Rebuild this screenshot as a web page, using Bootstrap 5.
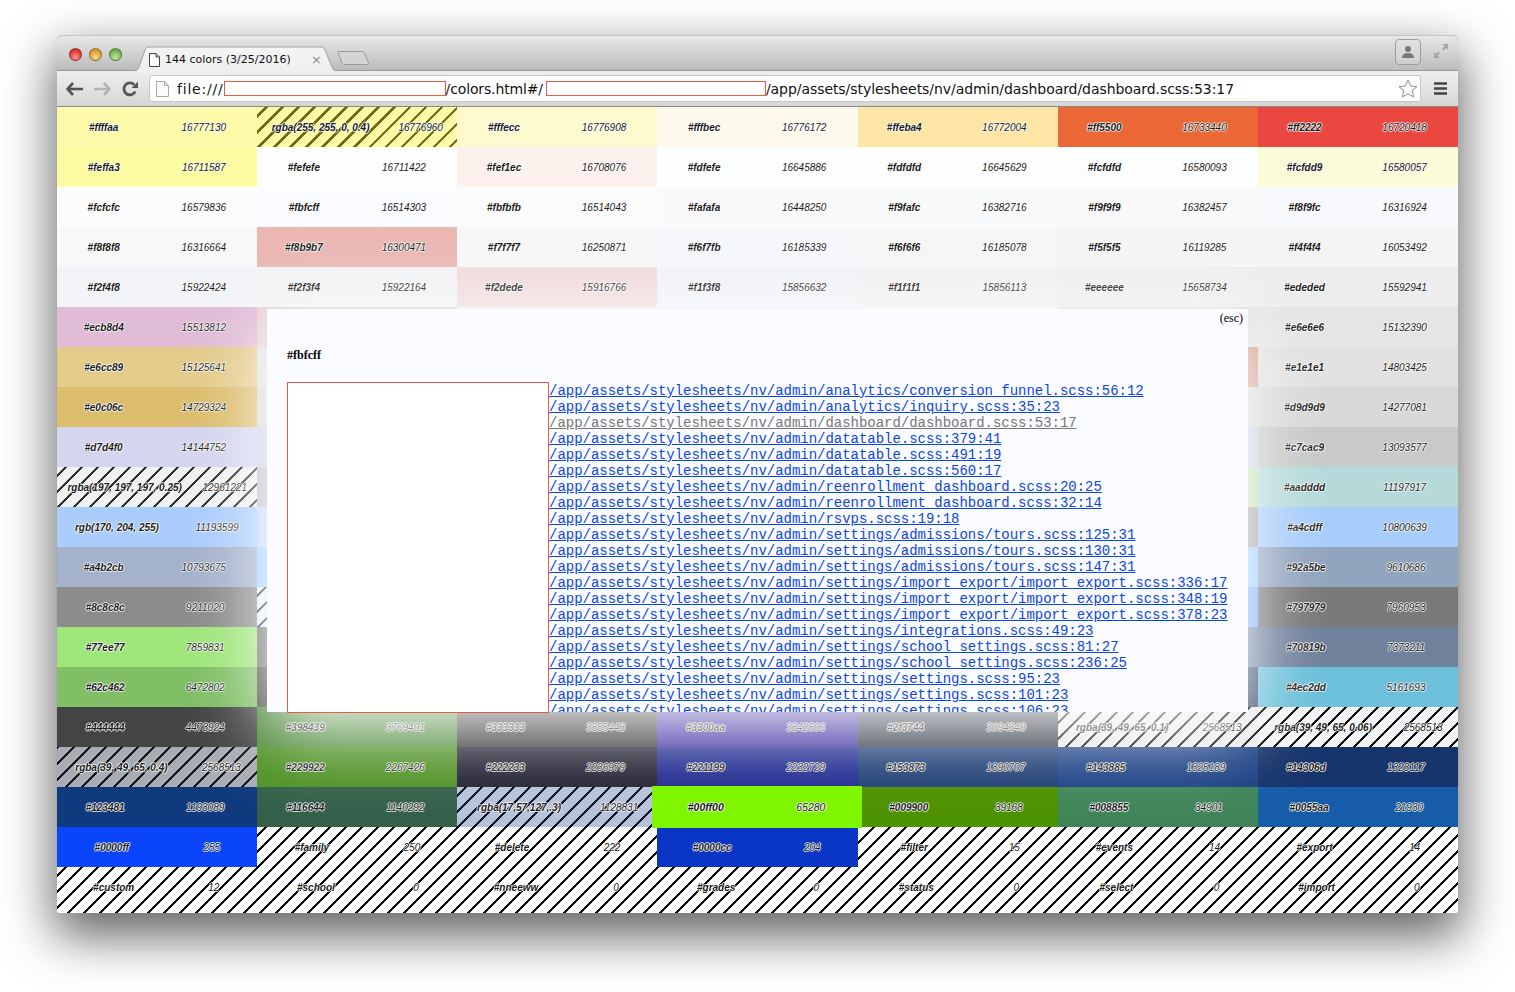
<!DOCTYPE html>
<html lang="en">
<head>
<meta charset="UTF-8">
<title>144 colors (3/25/2016)</title>
<link href="https://cdn.jsdelivr.net/npm/bootstrap@5.3.0/dist/css/bootstrap.min.css" rel="stylesheet">
<style>
html, body { height: 100%; }
body { background: #fff; margin: 0; overflow: hidden; }
.shot { padding: 35px 57px 0; }
.win { width: 1401px; height: 878px; border-radius: 5px 5px 3px 3px; box-shadow: 0 20px 50px 3px rgba(0,0,0,.62); }

/* browser chrome */
.tabstrip { height: 36px; background: linear-gradient(#e9e9e9, #bcbcbc); border-bottom: 1px solid #979797; border-radius: 5px 5px 0 0; padding-left: 12px; padding-right: 9px; box-shadow: inset 0 1px 0 #c4c4c4; }
.lights { margin-top: 13px; }
.light { width: 13px; height: 13px; border-radius: 50%; margin-right: 7px; border: 1px solid rgba(0,0,0,.35); }
.light-r { background: radial-gradient(circle at 50% 75%, #f79a94, #d8322c 70%); }
.light-y { background: radial-gradient(circle at 50% 75%, #f9d98c, #d99a28 70%); }
.light-g { background: radial-gradient(circle at 50% 75%, #c4e79a, #72ad4c 70%); }
.tabshape { width: 204px; height: 25px; margin-left: 4px; margin-top: 11px; padding: 3px 11px 0 16px; position: relative; }
.tabshape svg.tabbg { position: absolute; left: 0; top: 0; }
.tabicon { position: relative; margin-right: 5px; }
.tabtitle { position: relative; font: 11px/16px "DejaVu Sans", sans-serif; color: #111; white-space: nowrap; }
.tabclose { position: relative; font: 13px/16px "DejaVu Sans", sans-serif; color: #8a8a8a; }
.newtab { margin-left: 0; margin-top: 15px; }
.person { width: 26px; height: 26px; border: 1px solid #9c9c9c; border-radius: 4px; margin-right: 12px; background: linear-gradient(#e2e2e2, #cfcfcf); }
.toolbar { height: 36px; background: linear-gradient(#efefef, #d6d6d6); border-bottom: 1px solid #8a8a8a; padding-left: 9px; padding-right: 9px; }
.navgap { margin-left: 11px; }
.omnibox { width: 1272px; height: 27px; margin-left: 11px; margin-right: 13px; padding: 0 2px 0 6px; background: #fff; border: 1px solid #c6c6c6; border-radius: 3px; font: 14px/25px "DejaVu Sans", sans-serif; color: #111; white-space: nowrap; }
.omnibox span { padding-top: 1px; }
.url-scheme { letter-spacing: .8px; }
.url-mid { letter-spacing: -.14px; }
.url-tail { letter-spacing: -.06px; }
.omnibox .redact { display: inline-block; height: 15px; padding: 0; background: #fff; border: 1px solid #ea5b47; }
.redact-a { width: 222px; }
.redact-b { width: 220px; margin-left: 3px; }

/* colour grid */
.colorpage { height: 806px; overflow: hidden; position: relative; border-radius: 0 0 3px 3px;
  background: repeating-linear-gradient(135deg, #000 0, #000 2.2px, #fff 2.2px, #fff 11.31px); }
.colorgrid { display: grid; grid-template-columns: repeat(7, 1fr); grid-auto-rows: 40px; }
.swatch { font: italic 10px/12px "Liberation Sans", Arial, sans-serif; color: #1c1c1c; padding-top: 1px; text-shadow: 1px 0 0 rgba(255,255,255,.8), -1px 0 0 rgba(255,255,255,.8), 0 1px 0 rgba(255,255,255,.8), 0 -1px 0 rgba(255,255,255,.8); white-space: nowrap; min-width: 0; }
.swatch span { flex-basis: 0; text-align: center; }
.swatch-name { font-weight: 700; }
.swatch-hot { position: relative; z-index: 3; transform: scale(1.05); }

/* popup */
.popup { position: absolute; left: 210px; top: 202px; width: 981px; height: 403px; z-index: 2; background: #fbfcff; box-shadow: 0 15px 70px 2px #fff; padding: 0 5px 0 20px; font-family: "Liberation Serif", serif; color: #000; }
.popup-esc { font-size: 12px; line-height: 18px; text-align: right; }
.popup-title { font-size: 12px; line-height: 18px; font-weight: 700; margin: 19px 0 18px; }
.popup-sample { width: 262px; height: 331px; background: #fff; border: 1px solid #ea5b47; flex: none; }
.popup-links { height: 330px; padding-top: 1px; overflow: hidden; font: 14px/16px "Liberation Mono", "Courier New", monospace; letter-spacing: -.025px; white-space: nowrap; }
.popup-links a { display: block; color: #0b45e5; }
.popup-links a.seen { color: #777; }
</style>
</head>
<body>
<div class="shot">
  <div class="win">
    <div class="tabstrip d-flex align-items-start">
      <div class="lights d-flex">
        <div class="light light-r"></div>
        <div class="light light-y"></div>
        <div class="light light-g"></div>
      </div>
      <div class="tabshape d-flex align-items-center">
        <svg class="tabbg" width="204" height="25" viewBox="0 0 204 25"><defs><linearGradient id="tabfill" x1="0" y1="0" x2="0" y2="1"><stop offset="0" stop-color="#f4f4f4"/><stop offset="1" stop-color="#efefef"/></linearGradient></defs><path d="M0 25c4 0 5-1 6-4L12 4c1-2 2-3 5-3h171c2 0 3 1 4 3l7 17c1 3 2 4 5 4" fill="url(#tabfill)" stroke="#a2a2a2"/></svg>
        <svg class="tabicon" width="11" height="14" viewBox="0 0 11 14"><path d="M.5.5h6.500l3.500 3.500v9.500H.5zM7 .5V4h3.500" fill="#fff" stroke="#444"/></svg>
        <span class="tabtitle flex-grow-1">144 colors (3/25/2016)</span>
        <span class="tabclose me-1">×</span>
      </div>
      <svg class="newtab" width="33" height="16" viewBox="0 0 33 16"><path d="M1.500 1.500h24c1 0 1.500.5 2 1.500l4 10c.3 1.200 0 1.500-1 1.500H7c-1 0-1.500-.5-2-1.500L1 3c-.3-1 0-1.500.5-1.500z" fill="#d4d4d4" stroke="#9a9a9a"/></svg>
      <div class="flex-grow-1"></div>
      <div class="person d-flex justify-content-center align-items-center mt-1">
        <svg width="14" height="14" viewBox="0 0 14 14"><circle cx="7" cy="4" r="3" fill="#777"/><path d="M1 13c0-3 2-5 6-5s6 2 6 5z" fill="#777"/></svg>
      </div>
      <svg class="mt-2" width="16" height="16" viewBox="0 0 16 16"><path d="M9 1h6v6l-2-2-2.500 2.500-1.500-1.500L11.500 3zM7 15H1V9l2 2 2.500-2.500L7 10 4.500 13z" fill="#a6a6a6"/></svg>
    </div>
    <div class="toolbar d-flex align-items-center">
      <svg width="17" height="14" viewBox="0 0 17 14"><path d="M7 1 1.500 7 7 13M2 7h15" fill="none" stroke="#555" stroke-width="2.600"/></svg>
      <svg class="navgap" width="17" height="14" viewBox="0 0 17 14"><path d="M10 1l5.500 6L10 13M15 7H0" fill="none" stroke="#b4b4b4" stroke-width="2.600"/></svg>
      <svg class="navgap" width="16" height="16" viewBox="0 0 16 16"><path d="M13.300 10.500A6 6 0 1 1 12.200 3.700" fill="none" stroke="#555" stroke-width="2.800"/><path d="M9.500 7H16V.5z" fill="#555"/></svg>
      <div class="omnibox d-flex align-items-center">
        <svg class="me-2" width="13" height="16" viewBox="0 0 13 16"><path d="M.5.500h8l4 4v11H.5zM8.500.500v4h4" fill="#fbfbfb" stroke="#a8a8a8"/></svg>
        <span class="url-scheme">file:///</span><span class="redact redact-a"></span><span class="url-mid">/colors.html#/</span><span class="redact redact-b"></span><span class="url-tail">/app/assets/stylesheets/nv/admin/dashboard/dashboard.scss:53:17</span>
        <span class="flex-grow-1"></span>
        <svg width="20" height="19" viewBox="0 0 20 19"><path d="M10 1l2.700 6 6.300.6-4.800 4.200 1.500 6.200L10 14.700 4.300 18l1.500-6.200L1 7.600 7.300 7z" fill="#fff" stroke="#8f8f8f"/></svg>
      </div>
      <svg width="13" height="13" viewBox="0 0 13 13"><path d="M0 1.500h13M0 6.500h13M0 11.500h13" stroke="#444" stroke-width="2.600"/></svg>
    </div>
    <div class="colorpage">
      <div class="colorgrid" id="colorgrid"></div>
      <div class="popup d-flex flex-column">
        <div class="popup-esc">(esc)</div>
        <div class="popup-title">#fbfcff</div>
        <div class="d-flex">
          <div class="popup-sample"></div>
          <div class="popup-links" id="popuplinks"></div>
        </div>
      </div>
    </div>
  </div>
</div>

<script src="https://cdn.jsdelivr.net/npm/bootstrap@5.3.0/dist/js/bootstrap.bundle.min.js"></script>
<script>
// name, number, colour as it shows on screen; a row with null is hidden behind the popup
const cells = [
  ['#ffffaa','16777130','#fdfba9'],['rgba(255, 255, 0, 0.4)','16776960','rgba(252,247,60,.45)'],['#fffecc','16776908','#fefad0'],['#fffbec','16776172','#fef9ed'],['#ffeba4','16772004','#fde6a5'],['#ff5500','16733440','#ec6736'],['#ff2222','16720418','#ea4740'],
  ['#feffa3','16711587','#fdfca3'],['#fefefe','16711422','#fefefe'],['#fef1ec','16708076','#fcf1ed'],['#fdfefe','16645886','#fdfefe'],['#fdfdfd','16645629','#fdfdfd'],['#fcfdfd','16580093','#fcfdfd'],['#fcfdd9','16580057','#fbfad9'],
  ['#fcfcfc','16579836','#fcfcfc'],['#fbfcff','16514303','#fbfcff'],['#fbfbfb','16514043','#fbfbfb'],['#fafafa','16448250','#fafafa'],['#f9fafc','16382716','#f9fafc'],['#f9f9f9','16382457','#f9f9f9'],['#f8f9fc','16316924','#f8f9fc'],
  ['#f8f8f8','16316664','#f8f8f8'],['#f8b9b7','16300471','#ebb8b4'],['#f7f7f7','16250871','#f7f7f7'],['#f6f7fb','16185339','#f6f7fb'],['#f6f6f6','16185078','#f6f6f6'],['#f5f5f5','16119285','#f5f5f5'],['#f4f4f4','16053492','#f4f4f4'],
  ['#f2f4f8','15922424','#f2f4f8'],['#f2f3f4','15922164','#f2f3f4'],['#f2dede','15916766','#f0dcdc'],['#f1f3f8','15856632','#f1f3f8'],['#f1f1f1','15856113','#f1f1f1'],['#eeeeee','15658734','#eeeeee'],['#ededed','15592941','#ededed'],
  ['#ecb8d4','15513812','#e0bcd6'],[null,'','#e6d0d6'],[null,'','#f0f0f2'],[null,'','#f0f0f2'],[null,'','#f0f0f2'],[null,'','#e2e3df'],['#e6e6e6','15132390','#e5e5e5'],
  ['#e6cc89','15125641','#e3cb8a'],[null,'','#e1e1e1'],[null,'','#eee'],[null,'','#eee'],[null,'','#eee'],[null,'','#d5a38f'],['#e1e1e1','14803425','#e1e1e1'],
  ['#e0c06c','14729324','#dcbd6e'],[null,'','#d9d9d9'],[null,'','#eee'],[null,'','#eee'],[null,'','#eee'],[null,'','#dadada'],['#d9d9d9','14277081','#d8d8d8'],
  ['#d7d4f0','14144752','#d4d5ee'],[null,'','#cbcfe3'],[null,'','#eee'],[null,'','#eee'],[null,'','#eee'],[null,'','#cbcfe3'],['#c7cac9','13093577','#c7cac9'],
  ['rgba(197, 197, 197, 0.25)','12961221','rgba(197,197,197,.25)'],[null,'','#bebec5'],[null,'','#eee'],[null,'','#eee'],[null,'','#eee'],[null,'','#c5deb6'],['#aadddd','11197917','#b6dada'],
  ['rgb(170, 204, 255)','11193599','#abcdfb'],[null,'','#c0d8ff'],[null,'','#eee'],[null,'','#eee'],[null,'','#eee'],[null,'','#a2a5ab'],['#a4cdff','10800639','#a8cdfb'],
  ['#a4b2cb','10793675','#a4b2cb'],[null,'','#9dcbff'],[null,'','#eee'],[null,'','#eee'],[null,'','#eee'],[null,'','#9dcbff'],['#92a5be','9610686','#92a5be'],
  ['#8c8c8c','9211020','#8c8c8c'],[null,'','rgba(170,204,255,.3)'],[null,'','#eee'],[null,'','#eee'],[null,'','#eee'],[null,'','#80b1f8'],['#797979','7960953','#797979'],
  ['#77ee77','7859831','#9ee57a'],[null,'','#6b6b6b'],[null,'','#eee'],[null,'','#eee'],[null,'','#eee'],[null,'','#7085a3'],['#70819b','7373211','#70819b'],
  ['#62c462','6472802','#80bf66'],[null,'','#484848'],[null,'','#eee'],[null,'','#eee'],[null,'','#eee'],[null,'','#3f526e'],['#4ec2dd','5161693','#6cc0da'],
  ['#444444','4473924','#444444'],['#398439','3769401','#4d8a3a'],['#333333','3355443','#333333'],['#3300aa','3342506','#3a2aa0'],['#2f3744','3094340','#2f3744'],['rgba(39, 49, 65, 0.1)','2568513','rgba(39,49,65,.1)'],['rgba(39, 49, 65, 0.06)','2568513','rgba(39,49,65,.06)'],
  ['rgba(39, 49, 65, 0.4)','2568513','rgba(39,49,65,.4)'],['#229922','2267426','#4f9225'],['#222233','2236979','#222233'],['#221199','2232729','#1f2a90'],['#153873','1390707','#1e3e75'],['#143885','1325189','#1d4286'],['#14306d','1323117','#17356c'],
  ['#123481','1193089','#103a7e'],['#116644','1140292','#34604a'],['rgba(17,57,127,.3)','1128831','rgba(17,57,127,.3)'],['#00ff00','65280','#7ff500'],['#009900','39168','#4d9200'],['#008855','34901','#40855a'],['#0055aa','21930','#165ca8'],
  ['#0000ff','255','#0a45fb'],['#family','250',''],['#delete','222',''],['#0000cc','204','#0a36c6'],['#filter','15',''],['#events','14',''],['#export','14',''],
  ['#custom','12',''],['#school','0',''],['#nneeww','0',''],['#grades','0',''],['#status','0',''],['#select','0',''],['#import','0','']
];

// columns share the width in proportion to their text, as table cells do;
// long names squeeze out most of the padding
function pad(name) {
  if (name.length <= 8) return 56;
  return name.length <= 22 ? 31 : 19;
}

const grid = document.getElementById('colorgrid');
cells.forEach(function (c) {
  const el = document.createElement('div');
  el.className = 'swatch d-flex align-items-center';
  if (c[2]) el.style.backgroundColor = c[2];
  if (c[0] === '#00ff00') el.classList.add('swatch-hot');
  if (c[0]) {
    const p = pad(c[0]);
    el.innerHTML = '<span class="swatch-name" style="flex-grow:' + (c[0].length * 4.5 + p) + '">' + c[0] + '</span>' +
      '<span class="swatch-num" style="flex-grow:' + (c[1].length * 5.5 + p) + '">' + c[1] + '</span>';
  }
  grid.appendChild(el);
});

const base = '/app/assets/stylesheets/nv/admin/';
const links = [
  'analytics/conversion_funnel.scss:56:12','analytics/inquiry.scss:35:23','dashboard/dashboard.scss:53:17',
  'datatable.scss:379:41','datatable.scss:491:19','datatable.scss:560:17',
  'reenrollment_dashboard.scss:20:25','reenrollment_dashboard.scss:32:14','rsvps.scss:19:18',
  'settings/admissions/tours.scss:125:31','settings/admissions/tours.scss:130:31','settings/admissions/tours.scss:147:31',
  'settings/import_export/import_export.scss:336:17','settings/import_export/import_export.scss:348:19','settings/import_export/import_export.scss:378:23',
  'settings/integrations.scss:49:23','settings/school_settings.scss:81:27','settings/school_settings.scss:236:25',
  'settings/settings.scss:95:23','settings/settings.scss:101:23','settings/settings.scss:106:23'
];
const list = document.getElementById('popuplinks');
links.forEach(function (l, i) {
  const a = document.createElement('a');
  a.href = '#';
  a.textContent = base + l;
  if (i === 2) a.className = 'seen';
  list.appendChild(a);
});
</script>
</body>
</html>
